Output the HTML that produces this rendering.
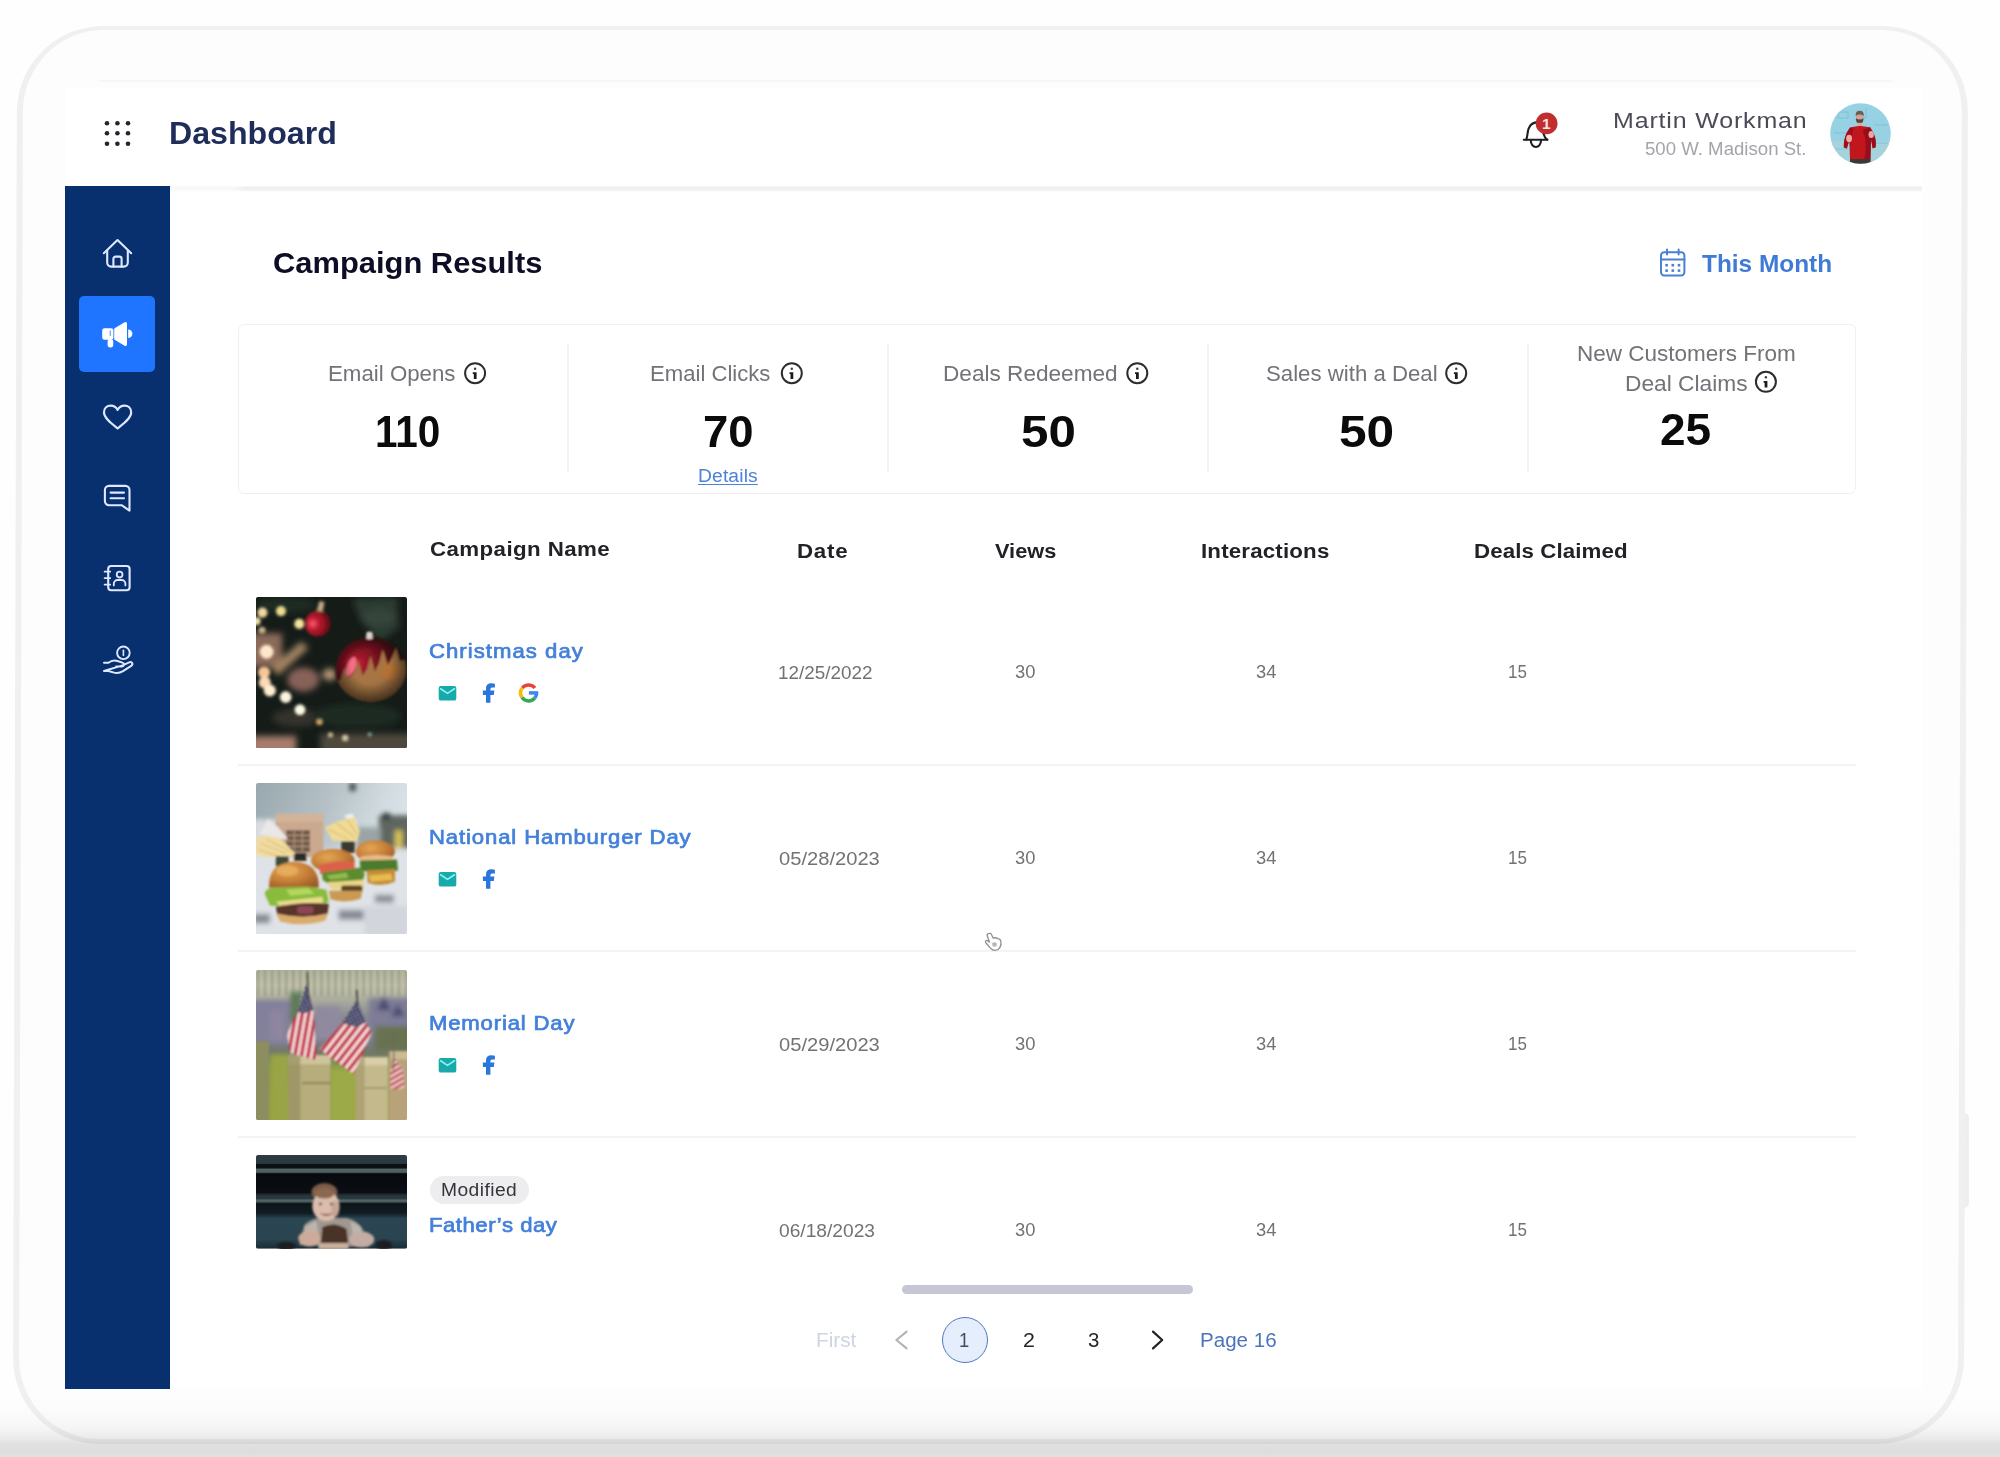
<!DOCTYPE html>
<html lang="en"><head><meta charset="utf-8"><title>Dashboard - Campaign Results</title>
<style>
*{box-sizing:border-box}
html,body{margin:0;padding:0}
body{width:2000px;height:1457px;position:relative;overflow:hidden;background:#fefefe;font-family:"Liberation Sans",sans-serif;}
.abs{position:absolute}
.tx{position:absolute;white-space:nowrap;line-height:1;margin:0;padding:0;transform-origin:0 0;text-decoration:none}
.one{margin-left:-0.07em;margin-right:-0.12em}
.shade{position:absolute;left:0;top:1392px;width:2000px;height:65px;background:linear-gradient(to bottom,rgba(0,0,0,0) 0%,rgba(0,0,0,0.008) 28%,rgba(0,0,0,0.028) 52%,rgba(0,0,0,0.07) 70%,rgba(0,0,0,0.115) 80%,rgba(0,0,0,0.13) 92%,rgba(0,0,0,0.115) 100%);pointer-events:none}
.frame{position:absolute;left:15.4px;top:25.5px;width:1951px;height:1418px;transform:skewX(-0.17deg);border:solid #f0f0f0;border-width:4px 6px 5px 6px;border-radius:86px;background:transparent}
.framein{position:absolute;left:21px;top:29px;width:1940px;height:1412px;border-radius:80px;background:#fdfdfd;transform:skewX(-0.17deg)}
.topline{position:absolute;left:99px;top:80px;width:1793px;height:1.5px;background:#f6f6f6}
.btn{position:absolute;left:1962px;top:1113px;width:7.4px;height:95px;background:#eeeeee;border-radius:0 5px 5px 0}
.screen{position:absolute;left:66px;top:88px;width:1857px;height:1301px;background:#fff}
.hdrline{position:absolute;left:170px;top:185.9px;width:1752px;height:6px;background:linear-gradient(to bottom,#f6f6f6 0%,#eeeeee 40%,#f3f3f3 70%,rgba(255,255,255,0) 100%);-webkit-mask-image:linear-gradient(to right,rgba(0,0,0,0.45) 0,rgba(0,0,0,0.45) 62px,#000 76px);mask-image:linear-gradient(to right,rgba(0,0,0,0.45) 0,rgba(0,0,0,0.45) 62px,#000 76px)}
.side{position:absolute;left:65px;top:186px;width:105px;height:1203px;background:#08306f}
.active{position:absolute;left:79.4px;top:295.9px;width:76px;height:76px;border-radius:5px;background:#1f75ff}
.card{position:absolute;left:238px;top:324px;width:1618px;height:170px;border:1.5px solid #f0f0f2;border-radius:6px;background:#fff}
.vdiv{position:absolute;top:344px;width:1.5px;height:129px;background:#f3f3f5}
.hsep{position:absolute;left:238px;width:1618px;height:1.6px;background:#f3f3f4}
.thumb{position:absolute;left:255.5px;width:151px;overflow:hidden;border-radius:2px}
.badge{position:absolute;left:430px;top:1176px;width:99px;height:28px;border-radius:14px;background:#ededf0}
.scroll{position:absolute;left:902px;top:1284.5px;width:290.5px;height:9px;border-radius:5px;background:#c5c7d5}
.pcur{position:absolute;left:942px;top:1316.8px;width:46.4px;height:46.4px;border-radius:50%;background:#e4eefc;border:1.6px solid #5278be}
svg{position:absolute;overflow:visible}
</style></head><body>
<div class="framein"></div><div class="btn"></div><div class="frame"></div><div class="topline"></div>
<div class="screen"></div>
<div class="hdrline"></div>
<nav class="side"></nav><div class="active"></div>
<svg width="2000" height="1457" viewBox="0 0 2000 1457" style="left:0;top:0" fill="none" stroke="#dfe8ff" stroke-width="2.1" stroke-linecap="round" stroke-linejoin="round"><path d="M103.8 253.2 L117.5 240 L131.2 253.2"/><path d="M107.2 250.6 V262.6 a4 4 0 0 0 4 4 H123.8 a4 4 0 0 0 4 -4 V250.6"/><path d="M113.4 266.4 V258.8 a2.2 2.2 0 0 1 2.2 -2.2 h3.8 a2.2 2.2 0 0 1 2.2 2.2 V266.4"/><g fill="#ffffff" stroke="none"><rect x="102.2" y="328.2" width="11.2" height="11.6" rx="2.4"/><path d="M114.2 328.6 L124.6 322.2 a1.6 1.6 0 0 1 2.4 1.4 V344.4 a1.6 1.6 0 0 1 -2.4 1.4 L114.2 339.4 Z"/><path d="M128.2 329.6 a4.2 4.2 0 0 1 0 8.4 Z"/><rect x="107.6" y="339" width="5.6" height="8.4" rx="2.6"/></g><path d="M110.3 331 v4.4" stroke="#7fb0ff" stroke-width="1.4"/><path d="M117.6 428.4 C112.2 424 104 418.2 104 412.4 C104 408 107.2 405.6 110.7 405.6 C113.7 405.6 116.3 407.4 117.6 409.9 C118.9 407.4 121.5 405.6 124.5 405.6 C128 405.6 131.2 408 131.2 412.4 C131.2 418.2 123 424 117.6 428.4 Z"/><path d="M109 485.9 H125.4 a4.1 4.1 0 0 1 4.1 4.1 V510.6 L121.6 505.2 H109 a4.1 4.1 0 0 1 -4.1 -4.1 V490 a4.1 4.1 0 0 1 4.1 -4.1 Z"/><path d="M110.6 492.6 H124 M110.6 498.2 H124"/><rect x="108.2" y="566" width="21.4" height="24.2" rx="3"/><path d="M104.6 571.6 h5.6 M104.6 578.1 h5.6 M104.6 584.6 h5.6" stroke-width="1.8"/><circle cx="119.6" cy="574.6" r="2.9" stroke-width="1.8"/><path d="M113.8 585.4 v-1.6 a3.8 3.8 0 0 1 3.8 -3.8 h4 a3.8 3.8 0 0 1 3.8 3.8 v1.6" stroke-width="1.8"/><circle cx="123.4" cy="652.8" r="6.3" stroke-width="1.9"/><path d="M123.4 650.2 v5.2" stroke-width="1.6"/><path d="M104 662.8 h4.4 c2.8 -2.2 6 -2.8 9 -1.8 l5 1.6 c2.2 0.8 2.2 3.6 -0.4 3.8 h-5.8 M122.6 665.4 l6.6 -3 c2.8 -1.2 4.4 1.8 2 3.4 l-8.2 5.4 c-3 1.8 -6.6 2.2 -9.8 1.2 l-4.8 -1.4 h-4.4 Z" stroke-width="2"/></svg>
<svg width="2000" height="1457" viewBox="0 0 2000 1457" style="left:0;top:0" fill="none" ><circle cx="107.0" cy="123.2" r="2.3" fill="#24242c"/><circle cx="117.4" cy="123.2" r="2.3" fill="#24242c"/><circle cx="128.0" cy="123.2" r="2.3" fill="#24242c"/><circle cx="107.0" cy="133.3" r="2.3" fill="#24242c"/><circle cx="117.4" cy="133.3" r="2.3" fill="#24242c"/><circle cx="128.0" cy="133.3" r="2.3" fill="#24242c"/><circle cx="107.0" cy="143.7" r="2.3" fill="#24242c"/><circle cx="117.4" cy="143.7" r="2.3" fill="#24242c"/><circle cx="128.0" cy="143.7" r="2.3" fill="#24242c"/><g stroke="#1d1d22" stroke-width="2.1" stroke-linecap="round" stroke-linejoin="round"><path d="M1523.8 139.8 H1547.4"/><path d="M1526.3 139.6 C1527.6 136 1527.4 132 1528.6 128.6 C1529.8 125.4 1532.2 123 1536 122.4"/><path d="M1543.4 133.6 C1544.2 136.6 1545.4 138.4 1547.2 139.6"/><path d="M1530.8 140.6 a5.1 6.4 0 0 0 10.2 0"/></g><circle cx="1546.6" cy="123.4" r="10.9" fill="#c02e30"/><text x="1546.3" y="128.9" text-anchor="middle" font-family="Liberation Sans, sans-serif" font-size="15.5" font-weight="700" fill="#ffe2e2">1</text><g stroke="#4b80d6" stroke-width="2" stroke-linecap="round" stroke-linejoin="round"><rect x="1661" y="252.2" width="23.4" height="23.2" rx="3.2"/><path d="M1661 259.6 H1684.4 M1667 249.4 V254.4 M1678.6 249.4 V254.4"/></g><rect x="1665.3" y="263.9" width="2.6" height="2.6" fill="#4b80d6"/><rect x="1671.5" y="263.9" width="2.6" height="2.6" fill="#4b80d6"/><rect x="1677.7" y="263.9" width="2.6" height="2.6" fill="#4b80d6"/><rect x="1665.3" y="269.3" width="2.6" height="2.6" fill="#4b80d6"/><rect x="1671.5" y="269.3" width="2.6" height="2.6" fill="#4b80d6"/><rect x="1677.7" y="269.3" width="2.6" height="2.6" fill="#4b80d6"/></svg><svg width="61" height="61" viewBox="0 0 61 61" style="left:1829.6px;top:103.2px"><defs><clipPath id="avc"><circle cx="30.5" cy="30.5" r="30.3"/></clipPath><filter id="avb" x="-20%" y="-20%" width="140%" height="140%"><feGaussianBlur stdDeviation="0.65"/></filter></defs><g clip-path="url(#avc)"><rect width="61" height="61" fill="#96d2e3"/><rect x="0" y="38" width="61" height="23" fill="#a4d3dc"/><g filter="url(#avb)"><path d="M8 9 h10 v6 h-10z M36 5 v10 h-6 M4 30 h14 M44 22 h14 M46 40 h12 M6 46 h12" stroke="#78bccc" stroke-width="0.8" fill="none"/><ellipse cx="29.7" cy="13.6" rx="3.9" ry="5.3" fill="#caa898"/><path d="M25.7 13 Q25.2 7.8 29.7 7.8 Q34.2 7.8 33.7 13 Q29.7 10.2 25.7 13Z" fill="#6e5c54"/><path d="M25.9 15.2 Q29.7 17.6 33.5 15.2 Q33.8 20.2 29.7 20.8 Q25.6 20.2 25.9 15.2Z" fill="#58463e"/><rect x="27.5" y="19.8" width="4.6" height="4.2" fill="#e4a49c"/><path d="M20 24.6 q10 -3.4 20 0 l3 5 q3.6 7 2.6 15 l-3 1 l-1.6 -9 l-0.6 20 h-20.4 l-0.6 -20 l-2.6 9 l-3 -1 q-0.4 -8 3 -15 z" fill="#c0121f"/><path d="M33 27 q5 12 1.5 29 h6 l0.6 -20 l1.6 9 l3 -1 q1 -8 -2.6 -15 l-3 -5z" fill="#8c0e1a" opacity="0.8"/><path d="M20 24.6 l-3 5 q-3.4 7 -3 15 l3 1 l2.6 -9 l0.2 8 q1.6 -12 3.4 -19z" fill="#960f1c" opacity="0.7"/><ellipse cx="19.1" cy="35.4" rx="2.9" ry="3.7" fill="#f0aaa4"/><ellipse cx="41.2" cy="31.6" rx="2.7" ry="3.5" fill="#eaa6a0"/><rect x="20" y="56" width="20.6" height="5" fill="#3c3838"/></g></g></svg>
<section class="card"></section>
<div class="vdiv" style="left:567px"></div>
<div class="vdiv" style="left:887.2px"></div>
<div class="vdiv" style="left:1207.2px"></div>
<div class="vdiv" style="left:1527px"></div>
<svg width="2000" height="1457" viewBox="0 0 2000 1457" style="left:0;top:0" fill="none" ><circle cx="475.1" cy="373.2" r="10" stroke="#2c2c30" stroke-width="2"/><circle cx="475.1" cy="368.7" r="1.2" fill="#3c3c40"/><path d="M472.8 372.3 h3.8 v6.6 h-2.8 v-4.8 h-1 z" fill="#1c1c1e"/><circle cx="791.8" cy="373.2" r="10" stroke="#2c2c30" stroke-width="2"/><circle cx="791.8" cy="368.7" r="1.2" fill="#3c3c40"/><path d="M789.5 372.3 h3.8 v6.6 h-2.8 v-4.8 h-1 z" fill="#1c1c1e"/><circle cx="1137.3" cy="373.2" r="10" stroke="#2c2c30" stroke-width="2"/><circle cx="1137.3" cy="368.7" r="1.2" fill="#3c3c40"/><path d="M1135.0 372.3 h3.8 v6.6 h-2.8 v-4.8 h-1 z" fill="#1c1c1e"/><circle cx="1456.2" cy="373.2" r="10" stroke="#2c2c30" stroke-width="2"/><circle cx="1456.2" cy="368.7" r="1.2" fill="#3c3c40"/><path d="M1453.9 372.3 h3.8 v6.6 h-2.8 v-4.8 h-1 z" fill="#1c1c1e"/><circle cx="1765.9" cy="381.8" r="10" stroke="#2c2c30" stroke-width="2"/><circle cx="1765.9" cy="377.3" r="1.2" fill="#3c3c40"/><path d="M1763.6 380.9 h3.8 v6.6 h-2.8 v-4.8 h-1 z" fill="#1c1c1e"/></svg>
<div class="hsep" style="top:764px"></div>
<div class="hsep" style="top:950px"></div>
<div class="hsep" style="top:1136px"></div>
<svg class="thumb" width="151" height="151" viewBox="0 0 150 150" preserveAspectRatio="none" style="left:255.5px;top:597px;border-radius:2px"><defs><filter id="x1" x="-30%" y="-30%" width="160%" height="160%"><feGaussianBlur stdDeviation="1.5"/></filter><filter id="x2" x="-30%" y="-30%" width="160%" height="160%"><feGaussianBlur stdDeviation="3.2"/></filter><filter id="x3" x="-30%" y="-30%" width="160%" height="160%"><feGaussianBlur stdDeviation="0.9"/></filter><radialGradient id="xo" cx="0.3" cy="0.42" r="0.8"><stop offset="0" stop-color="#c42038"/><stop offset="0.25" stop-color="#8c1424"/><stop offset="0.6" stop-color="#4c0d16"/><stop offset="1" stop-color="#2a0a0e"/></radialGradient><linearGradient id="xg" x1="0" y1="0" x2="1" y2="1"><stop offset="0" stop-color="#9a6c48"/><stop offset="0.5" stop-color="#a87644"/><stop offset="1" stop-color="#86603e"/></linearGradient><radialGradient id="xs" cx="0.5" cy="0.45" r="0.55"><stop offset="0.5" stop-color="#000" stop-opacity="0"/><stop offset="1" stop-color="#000" stop-opacity="0.55"/></radialGradient><radialGradient id="xr" cx="0.3" cy="0.5" r="0.75"><stop offset="0" stop-color="#ff6078"/><stop offset="0.3" stop-color="#c01c30"/><stop offset="0.75" stop-color="#7c0e1a"/><stop offset="1" stop-color="#40080e"/></radialGradient><clipPath id="xc"><ellipse cx="114" cy="72" rx="35" ry="32"/></clipPath></defs><rect width="150" height="150" fill="#151c18"/><g filter="url(#x2)"><rect x="-6" y="36" width="32" height="34" fill="#8c6a5a"/><path d="M15 70 L45 44 L52 51 L22 78Z" fill="#a08260"/><ellipse cx="47" cy="82" rx="16" ry="12" fill="#866259"/><ellipse cx="73" cy="77" rx="7" ry="6" fill="#b89878"/><rect x="-6" y="138" width="46" height="18" fill="#a67c6c"/><rect x="64" y="136" width="92" height="20" fill="#50483e"/><path d="M96 2 L140 0 L142 30 L124 44 L104 24Z" fill="#2c3a32"/><ellipse cx="122" cy="20" rx="16" ry="9" fill="#36443a"/><ellipse cx="40" cy="120" rx="24" ry="9" fill="#34322a"/><ellipse cx="100" cy="118" rx="44" ry="12" fill="#1a2a22"/><ellipse cx="30" cy="8" rx="30" ry="8" fill="#1c2a24"/></g><g filter="url(#x1)"><path d="M60 15 L63 4 L68 5 L66 16Z" fill="#c4ac8a"/><circle cx="61.5" cy="26.5" r="12.8" fill="url(#xr)"/></g><g filter="url(#x3)"><ellipse cx="114" cy="72" rx="35" ry="32" fill="url(#xo)"/><g clip-path="url(#xc)"><path d="M76 86 L84 82 L88 70 L92 80 L97 76 L101 62 L106 78 L110 72 L114 58 L118 74 L122 66 L126 52 L131 68 L135 60 L139 50 L143 64 L152 60 L152 110 L76 110Z" fill="url(#xg)"/><ellipse cx="133" cy="74" rx="9" ry="8" fill="#c0702e" opacity="0.6"/><ellipse cx="94.5" cy="69" rx="4.2" ry="10" fill="#ff7890" opacity="0.9" transform="rotate(20 94.5 69)"/><path d="M80 60 Q84 48 94 42" stroke="#e8c8c8" stroke-width="1.2" fill="none" opacity="0.7"/><ellipse cx="114" cy="72" rx="35" ry="32" fill="url(#xs)"/></g><rect x="109.5" y="34.5" width="6.5" height="7.5" rx="2" fill="#dcd4cc"/></g><g filter="url(#x1)"><circle cx="6.4" cy="15.5" r="5" fill="#f3d79e"/><circle cx="24.8" cy="14" r="5" fill="#efdb8e"/><circle cx="43" cy="26.7" r="5" fill="#f4e49c"/><circle cx="0.5" cy="24" r="4" fill="#f2e2b0"/><circle cx="10.5" cy="54.5" r="7" fill="#ffe8ca"/><circle cx="8" cy="75" r="6" fill="#f7c698"/><circle cx="8.7" cy="85" r="6" fill="#fbdab6"/><circle cx="13.7" cy="92.8" r="6" fill="#ffefcf"/><circle cx="29.5" cy="99.5" r="5.8" fill="#fff4e2"/><circle cx="43.7" cy="112" r="5.4" fill="#fffbe9"/><circle cx="63" cy="124" r="3.4" fill="#c9a162"/><circle cx="74" cy="137" r="2.6" fill="#c8b48a"/><circle cx="88.6" cy="140" r="3.2" fill="#d4c6a4"/><circle cx="6" cy="33" r="3.5" fill="#c9b088"/><circle cx="113" cy="136.6" r="2" fill="#86acac"/></g></svg><svg class="thumb" width="151" height="151" viewBox="0 0 150 150" preserveAspectRatio="none" style="left:255.5px;top:783px;border-radius:2px"><defs><filter id="b1" x="-30%" y="-30%" width="160%" height="160%"><feGaussianBlur stdDeviation="1.0"/></filter><filter id="b2" x="-30%" y="-30%" width="160%" height="160%"><feGaussianBlur stdDeviation="2.4"/></filter><linearGradient id="bb" x1="0" y1="0" x2="1" y2="0.35"><stop offset="0" stop-color="#98a8ae"/><stop offset="0.45" stop-color="#b4c0c5"/><stop offset="0.8" stop-color="#d2dce0"/><stop offset="1" stop-color="#dce5e9"/></linearGradient><radialGradient id="bn" cx="0.38" cy="0.35" r="0.75"><stop offset="0" stop-color="#e4a654"/><stop offset="0.5" stop-color="#c8823a"/><stop offset="1" stop-color="#9c5a26"/></radialGradient></defs><rect width="150" height="150" fill="url(#bb)"/><g filter="url(#b2)"><rect x="-5" y="66" width="160" height="90" fill="#dfe2e6"/><rect x="122" y="32" width="34" height="33" fill="#5e6660"/><rect x="126" y="30" width="7" height="6" fill="#24282c"/><rect x="138" y="47" width="7.5" height="18" fill="#d8c254"/><rect x="100" y="44" width="24" height="22" fill="#9aa4a4"/><rect x="-3" y="36" width="24" height="30" fill="#dadde0"/><rect x="118" y="111" width="19" height="8" fill="#8a9098"/><rect x="82" y="126" width="25" height="10" fill="#868c96"/><rect x="-3" y="130" width="17" height="9.5" fill="#868c96"/><rect x="108" y="122" width="44" height="30" fill="#d2d6dc"/><rect x="93" y="0" width="6" height="8" fill="#3a4048"/></g><g filter="url(#b1)"><rect x="19.7" y="30.6" width="47.2" height="43" fill="#caa98f"/><rect x="19.7" y="30.6" width="47.2" height="8" fill="#d3b39a"/><rect x="30" y="47" width="23.6" height="21.4" fill="#705848"/><path d="M30 52 h23.6 M30 57.5 h23.6 M30 63 h23.6 M38 47 v21 M46 47 v21" stroke="#b49880" stroke-width="1.1"/><rect x="38" y="69.4" width="12" height="8" fill="#2c2a28"/><path d="M4 50 L12 36 L22 44 L32 56 L18 56Z" fill="#e8e8e8"/><path d="M0 55 L10 52 L24 55 L39 70 L32 75 L4 73 L0 70Z" fill="#f0dca0"/><path d="M4 60 L30 70 M10 56 L34 68 M2 66 L24 73" stroke="#d8bc70" stroke-width="1"/><rect x="19.7" y="72.8" width="12.7" height="10" fill="#3b4a3a"/><path d="M88 32 L96 30 L101 40 L92 42Z" fill="#ececea"/><path d="M68.6 44 L82 38 L98 34 L103 48 L100 58 L76 57Z" fill="#f0da94"/><path d="M72 46 L92 56 M80 40 L98 54 M90 36 L100 50" stroke="#d6bc6c" stroke-width="1"/><rect x="84.7" y="58" width="13.3" height="11.4" fill="#3a3830"/><ellipse cx="118.5" cy="68" rx="19.5" ry="11.2" fill="url(#bn)"/><path d="M104 73 Q120 70 136 73 L136 78 L104 78Z" fill="#e8ba8a"/><path d="M103 77 L140 76 L141 87 L122 90 L104 87Z" fill="#4c7c2e"/><path d="M110 87 L138 85.5 L138 98 Q124 104 111 99Z" fill="#c48c3a"/><path d="M112 92 L134 90 L136 96 L114 98Z" fill="#e6bc50"/><ellipse cx="76.3" cy="77" rx="21.7" ry="11.6" fill="url(#bn)"/><path d="M62.4 82 Q80 76 98 79 L98 88 Q80 90 64 91Z" fill="#dc6048"/><path d="M65.8 89 L104 84 L108 90 L106 98 L72 100 L66 96Z" fill="#5c8c2e"/><path d="M70 92 L90 89 L92 94 L74 96Z" fill="#92ba4a"/><path d="M71 98.5 L107 96 L107 104.5 L75 106Z" fill="#ead688"/><rect x="84.7" y="101.7" width="21" height="6.6" rx="2" fill="#5a4420"/><path d="M72.4 107 L105.8 107 L104 115 Q88 120 74 115.5Z" fill="#ca9a52"/><path d="M13 104 Q12 79 37.7 78.3 Q63 79 62.4 104 Z" fill="url(#bn)"/><ellipse cx="31" cy="87" rx="11" ry="5.5" fill="#eab060" opacity="0.75"/><path d="M8.6 110 Q10 103 22 104 L50 102.8 L70 106 L72.4 118 L60 122.8 L14 122Z" fill="#88bc3c"/><path d="M30 106 L52 104.5 L58 110 L34 112Z" fill="#b6d660"/><path d="M20 118 L66 113 L67 121 L26 125Z" fill="#eadc8c"/><path d="M19.7 123 Q46 117.5 72.4 120 L71 130.5 Q46 136 21 130.5Z" fill="#58342a"/><rect x="41" y="122.5" width="16" height="7.5" rx="2" fill="#944a5a" opacity="0.85"/><path d="M20 129.6 Q46 136 71.3 129.6 L69 136.5 Q46 143.5 24 137.5Z" fill="#daac6c"/></g></svg><svg class="thumb" width="151" height="150.5" viewBox="0 0 150 150" preserveAspectRatio="none" style="left:255.5px;top:969.5px;border-radius:2px"><defs><filter id="f1" x="-30%" y="-30%" width="160%" height="160%"><feGaussianBlur stdDeviation="0.9"/></filter><filter id="f2" x="-30%" y="-30%" width="160%" height="160%"><feGaussianBlur stdDeviation="2.4"/></filter><linearGradient id="fb" x1="0" y1="0" x2="0" y2="1"><stop offset="0" stop-color="#acae96"/><stop offset="0.1" stop-color="#bebea8"/><stop offset="0.2" stop-color="#aaac9c"/><stop offset="0.3" stop-color="#8c8e92"/><stop offset="0.46" stop-color="#7c7c90"/><stop offset="0.55" stop-color="#707866"/><stop offset="0.64" stop-color="#8a984a"/><stop offset="1" stop-color="#96a244"/></linearGradient><pattern id="fs1" width="6.4" height="6.4" patternUnits="userSpaceOnUse" patternTransform="rotate(10)"><rect width="6.4" height="6.4" fill="#f3dede"/><rect width="3.3" height="6.4" fill="#c2283e"/></pattern><pattern id="fs2" width="6.6" height="6.6" patternUnits="userSpaceOnUse" patternTransform="rotate(-52)"><rect width="6.6" height="6.6" fill="#f5e0de"/><rect width="6.6" height="3.4" fill="#c12c40"/></pattern><pattern id="fs3" width="5" height="5" patternUnits="userSpaceOnUse" patternTransform="rotate(-30)"><rect width="5" height="5" fill="#ead0cc"/><rect width="5" height="2.6" fill="#c24a50"/></pattern><pattern id="fst" width="3.4" height="3.4" patternUnits="userSpaceOnUse" patternTransform="rotate(-25)"><rect width="3.4" height="3.4" fill="#33365a"/><circle cx="1.7" cy="1.7" r="0.75" fill="#d8d8e8"/></pattern><pattern id="fgr" width="7" height="30" patternUnits="userSpaceOnUse"><rect width="7" height="30" fill="none"/><rect x="1" width="2.2" height="30" fill="#8c8e78" opacity="0.5"/><rect x="4.6" width="1.4" height="30" fill="#c8c8b0" opacity="0.5"/></pattern></defs><rect width="150" height="150" fill="url(#fb)"/><g filter="url(#f1)"><rect width="150" height="26" fill="url(#fgr)"/></g><g filter="url(#f2)"><rect x="-4" y="30" width="38" height="44" fill="#82809a"/><rect x="14" y="40" width="14" height="30" fill="#8e86a0"/><rect x="58" y="36" width="26" height="34" fill="#908a9e"/><rect x="112" y="28" width="44" height="30" fill="#7e7c96"/><path d="M120 40 L127 26 L134 40Z M134 46 L141 34 L148 46Z" fill="#4a4a72"/><rect x="118" y="56" width="36" height="24" fill="#687250"/><rect x="34" y="22" width="12" height="30" fill="#5e7a58"/><rect x="14" y="84" width="20" height="70" fill="#98a444"/><rect x="74" y="98" width="26" height="56" fill="#9caa46"/></g><g filter="url(#f1)"><rect x="-2" y="71" width="15" height="82" fill="#8c8e5e"/><rect x="32" y="85" width="42" height="68" fill="#b6ac7c"/><rect x="32" y="85" width="42" height="9" fill="#cec49a"/><rect x="32" y="85" width="12" height="68" fill="#968e5e" opacity="0.7"/><rect x="46" y="112" width="28" height="1.6" fill="#857a54"/><rect x="99" y="87" width="32" height="66" fill="#c4b98c"/><rect x="99" y="87" width="32" height="8" fill="#d8cea8"/><rect x="99" y="87" width="9" height="66" fill="#a69a6a" opacity="0.7"/><rect x="108" y="117" width="22" height="1.4" fill="#9a8e64"/><rect x="132" y="81" width="20" height="72" fill="#b8a27a"/><rect x="134" y="81" width="18" height="8" fill="#cabc94"/><path d="M50 14 L57 40 L60.5 90 L34 83 L30.5 64 L41 42Z" fill="url(#fs1)"/><path d="M50 14 L57 40 L48 43 L41 42 Z" fill="url(#fst)"/><path d="M51 2 L52 30" stroke="#4a4a3a" stroke-width="1.4"/><path d="M100 30 L109 51 L115 63 L97 104 L63 79 L86 53Z" fill="url(#fs2)"/><path d="M100 30 L109.5 52 L100 57 L86 53 Z" fill="url(#fst)"/><path d="M100 20 L101 36" stroke="#3a3a34" stroke-width="1.4"/><path d="M138 88 L146 100 L147.5 118 L134 119 L133 102Z" fill="url(#fs3)"/><path d="M137.5 60 L136.5 100" stroke="#6a6a58" stroke-width="1.2"/></g></svg><svg class="thumb" width="151" height="93.6" viewBox="0 0 150 93.5" preserveAspectRatio="none" style="left:255.5px;top:1155.3px;border-radius:2px"><defs><filter id="d1" x="-30%" y="-30%" width="160%" height="160%"><feGaussianBlur stdDeviation="1.2"/></filter><filter id="d2" x="-30%" y="-30%" width="160%" height="160%"><feGaussianBlur stdDeviation="0.7"/></filter><linearGradient id="db" x1="0" y1="0" x2="0" y2="1"><stop offset="0" stop-color="#2c3c42"/><stop offset="0.09" stop-color="#2a3a40"/><stop offset="0.1" stop-color="#0a1014"/><stop offset="0.14" stop-color="#0b1216"/><stop offset="0.15" stop-color="#566664"/><stop offset="0.185" stop-color="#4c5c5c"/><stop offset="0.2" stop-color="#070b0f"/><stop offset="0.4" stop-color="#0a0e12"/><stop offset="0.43" stop-color="#25343a"/><stop offset="0.47" stop-color="#2a3a40"/><stop offset="0.48" stop-color="#586868"/><stop offset="0.5" stop-color="#4a5a5c"/><stop offset="0.52" stop-color="#0c1418"/><stop offset="0.62" stop-color="#101c22"/><stop offset="0.68" stop-color="#2a4652"/><stop offset="0.9" stop-color="#2a4450"/><stop offset="1" stop-color="#1a2c36"/></linearGradient></defs><rect width="150" height="93.5" fill="url(#db)"/><g filter="url(#d1)"><path d="M43 90 L48 70 Q56 62 68 63 L90 63 Q102 66 106 74 L112 92 Z" fill="#a09890"/><path d="M48 72 L60 66 L62 80 L50 84Z M94 66 L104 72 L106 84 L96 80Z" fill="#c8c2bc" opacity="0.7"/><path d="M66 72 Q78 66 90 74 L92 92 L64 92Z" fill="#4a3028"/><ellipse cx="53" cy="83.5" rx="11" ry="8" fill="#cdaa9a"/><ellipse cx="105" cy="84.5" rx="12.5" ry="8" fill="#c2aca4"/><ellipse cx="30" cy="91" rx="9" ry="4" fill="#1a1c20"/><ellipse cx="127" cy="90" rx="8" ry="4.5" fill="#1a1c20"/><rect x="62" y="88" width="30" height="6" fill="#c9b09c"/><ellipse cx="68" cy="37" rx="13" ry="9" fill="#7c5c46"/><ellipse cx="69.5" cy="51" rx="13.5" ry="15" fill="#dcbcac"/><ellipse cx="79" cy="54" rx="4" ry="8" fill="#b89888" opacity="0.6"/><ellipse cx="68" cy="38" rx="10" ry="5.5" fill="#8a6850"/><path d="M63 58 Q70 64 77 58 Q70 60 63 58Z" fill="#8a4a44"/><ellipse cx="64" cy="49" rx="1.6" ry="1.2" fill="#5a4a44"/><ellipse cx="75" cy="49" rx="1.6" ry="1.2" fill="#5a4a44"/></g></svg>
<svg width="2000" height="1457" viewBox="0 0 2000 1457" style="left:0;top:0" fill="none" ><rect x="438.7" y="686.0" width="17.6" height="14.6" rx="2.2" fill="#18aaaa"/><path d="M440.6 688.8 L447.5 693.4 L454.4 688.8" stroke="#8af2ee" stroke-width="1.7" stroke-linecap="round" stroke-linejoin="round"/><path transform="translate(0 0.0)" fill="#2a76da" d="M486 702.8 V695 H482.9 V690.6 H486 V688 C486 685 488 683.3 491.2 683.3 C492.8 683.3 494 683.5 494.9 683.7 V687.6 C494.3 687.5 493.6 687.4 492.8 687.4 C491.2 687.4 490.4 688 490.4 689.4 V690.6 H494.4 L493.8 695 H490.4 V702.8 Z"/><path d="M534.90 687.97 A8.0 8.0 0 0 0 522.30 687.97" stroke="#ea4335" stroke-width="3.5"/><path d="M522.30 687.97 A8.0 8.0 0 0 0 522.05 697.49" stroke="#fbbc05" stroke-width="3.5"/><path d="M522.05 697.49 A8.0 8.0 0 0 0 534.90 697.83" stroke="#34a853" stroke-width="3.5"/><path d="M534.90 697.83 A8.0 8.0 0 0 0 536.60 692.62" stroke="#4285f4" stroke-width="3.5"/><path d="M528.9 692.9 H538.2" stroke="#4285f4" stroke-width="3.5"/><rect x="438.7" y="872.0" width="17.6" height="14.6" rx="2.2" fill="#18aaaa"/><path d="M440.6 874.8 L447.5 879.4 L454.4 874.8" stroke="#8af2ee" stroke-width="1.7" stroke-linecap="round" stroke-linejoin="round"/><path transform="translate(0 186.0)" fill="#2a76da" d="M486 702.8 V695 H482.9 V690.6 H486 V688 C486 685 488 683.3 491.2 683.3 C492.8 683.3 494 683.5 494.9 683.7 V687.6 C494.3 687.5 493.6 687.4 492.8 687.4 C491.2 687.4 490.4 688 490.4 689.4 V690.6 H494.4 L493.8 695 H490.4 V702.8 Z"/><rect x="438.7" y="1058.0" width="17.6" height="14.6" rx="2.2" fill="#18aaaa"/><path d="M440.6 1060.8 L447.5 1065.4 L454.4 1060.8" stroke="#8af2ee" stroke-width="1.7" stroke-linecap="round" stroke-linejoin="round"/><path transform="translate(0 372.0)" fill="#2a76da" d="M486 702.8 V695 H482.9 V690.6 H486 V688 C486 685 488 683.3 491.2 683.3 C492.8 683.3 494 683.5 494.9 683.7 V687.6 C494.3 687.5 493.6 687.4 492.8 687.4 C491.2 687.4 490.4 688 490.4 689.4 V690.6 H494.4 L493.8 695 H490.4 V702.8 Z"/></svg>
<div class="badge"></div>
<div class="scroll"></div><div class="pcur"></div>
<svg width="2000" height="1457" viewBox="0 0 2000 1457" style="left:0;top:0" fill="none" stroke-width="2.2" stroke-linecap="round" stroke-linejoin="round"><path d="M906.6 1331.6 L896.4 1340 L906.6 1348.4" stroke="#b4b4b8"/><path d="M1153 1331.6 L1162.2 1340 L1153 1348.4" stroke="#222226"/><path d="M988.4 933.6 c1.4 -0.7 2.7 -0.1 3.2 1.2 l1.5 3.3 c1.8 -0.6 3.4 -0.4 4.5 0.5 c1.5 0 2.8 0.9 3.2 2.3 c0.6 2.3 0.2 5 -1.1 6.9 c-1.1 1.6 -2.7 2.5 -4.6 2.5 c-1.8 0 -3.2 -0.6 -4.4 -2 l-4.9 -5.6 c-1 -1.3 0.3 -2.8 1.7 -2 l2 1.4 l-2.2 -6.1 c-0.4 -1 0.1 -2 1.1 -2.4 z" fill="#ffffff" stroke="#8e8e8e" stroke-width="1.3"/><rect x="992.4" y="942.4" width="4.2" height="4" rx="0.8" fill="#b4b4b4" stroke="none"/></svg>
<header><h1 id="t_dash" class="tx" style="left:168.5px;top:118.25px;font-size:31px;font-weight:700;color:#1f2d5a;letter-spacing:0.000px;transform:scaleX(1.0368);">Dashboard</h1>
<span id="t_name" class="tx" style="left:1613.3px;top:109.88px;font-size:22.3px;font-weight:400;color:#4b4b57;letter-spacing:0.754px;transform:scaleX(1.1200);">Martin Workman</span>
<span id="t_addr" class="tx" style="left:1645.0px;top:141.27px;font-size:17.5px;font-weight:400;color:#a3a3ab;letter-spacing:0.000px;transform:scaleX(1.0638);">500 W. Madison St.</span></header>
<main>
<section class="stats"><h2 id="t_camp" class="tx" style="left:272.9px;top:247.67px;font-size:29.3px;font-weight:700;color:#0d0d26;letter-spacing:0.000px;transform:scaleX(1.0539);">Campaign Results</h2>
<span id="t_month" class="tx" style="left:1701.9px;top:251.77px;font-size:24px;font-weight:700;color:#3f7ad6;letter-spacing:0.000px;transform:scaleX(1.0164);">This Month</span>
<span id="t_s1" class="tx" style="left:327.8px;top:364.44px;font-size:21.5px;font-weight:400;color:#727278;letter-spacing:0.000px;transform:scaleX(1.0360);">Email Opens</span>
<span id="t_s2" class="tx" style="left:650.4px;top:364.44px;font-size:21.5px;font-weight:400;color:#727278;letter-spacing:0.000px;transform:scaleX(1.0285);">Email Clicks</span>
<span id="t_s3" class="tx" style="left:943.2px;top:364.44px;font-size:21.5px;font-weight:400;color:#727278;letter-spacing:0.000px;transform:scaleX(1.0514);">Deals Redeemed</span>
<span id="t_s4" class="tx" style="left:1266.0px;top:364.44px;font-size:21.5px;font-weight:400;color:#727278;letter-spacing:0.000px;transform:scaleX(1.0331);">Sales with a Deal</span>
<span id="t_s5a" class="tx" style="left:1577.0px;top:343.54px;font-size:21.5px;font-weight:400;color:#727278;letter-spacing:0.000px;transform:scaleX(1.0466);">New Customers From</span>
<span id="t_s5b" class="tx" style="left:1624.8px;top:373.84px;font-size:21.5px;font-weight:400;color:#727278;letter-spacing:0.000px;transform:scaleX(1.0575);">Deal Claims</span>
<span id="t_n1" class="tx" style="left:374.6px;top:410.16px;font-size:44px;font-weight:700;color:#0b0b0b;letter-spacing:0.000px;transform:scaleX(0.9200);">110</span>
<span id="t_n2" class="tx" style="left:703.0px;top:410.16px;font-size:44px;font-weight:700;color:#0b0b0b;letter-spacing:0.000px;transform:scaleX(1.0329);">70</span>
<span id="t_n3" class="tx" style="left:1021.3px;top:410.16px;font-size:44px;font-weight:700;color:#0b0b0b;letter-spacing:0.000px;transform:scaleX(1.1190);">50</span>
<span id="t_n4" class="tx" style="left:1338.5px;top:410.16px;font-size:44px;font-weight:700;color:#0b0b0b;letter-spacing:0.000px;transform:scaleX(1.1276);">50</span>
<span id="t_n5" class="tx" style="left:1660.4px;top:407.86px;font-size:44px;font-weight:700;color:#0b0b0b;letter-spacing:0.000px;transform:scaleX(1.0449);">25</span>
<a id="t_det" class="tx" style="left:697.9px;top:467.15px;font-size:18px;font-weight:400;color:#4d82d8;letter-spacing:0.124px;text-decoration:underline;text-underline-offset:2px;transform:scaleX(1.0700);">Details</a></section>
<section class="campaigns">
<div class="thead"><span id="t_h1" class="tx" style="left:430.3px;top:539.34px;font-size:20.3px;font-weight:700;color:#222226;letter-spacing:0.364px;transform:scaleX(1.1000);">Campaign Name</span>
<span id="t_h2" class="tx" style="left:796.7px;top:541.04px;font-size:20.3px;font-weight:700;color:#222226;letter-spacing:0.683px;transform:scaleX(1.1000);">Date</span>
<span id="t_h3" class="tx" style="left:995.1px;top:541.04px;font-size:20.3px;font-weight:700;color:#222226;letter-spacing:0.000px;transform:scaleX(1.0730);">Views</span>
<span id="t_h4" class="tx" style="left:1201.1px;top:541.04px;font-size:20.3px;font-weight:700;color:#222226;letter-spacing:0.154px;transform:scaleX(1.1000);">Interactions</span>
<span id="t_h5" class="tx" style="left:1474.1px;top:541.04px;font-size:20.3px;font-weight:700;color:#222226;letter-spacing:0.084px;transform:scaleX(1.1000);">Deals Claimed</span></div>
<article class="row"><a id="t_r0t" class="tx" style="left:429.2px;top:640.74px;font-size:20.3px;font-weight:400;color:#4380da;letter-spacing:0.962px;-webkit-text-stroke:0.72px #4380da;transform:scaleX(1.0900);">Christmas day</a>
<span id="t_r0d" class="tx" style="left:778.4px;top:663.64px;font-size:18.5px;font-weight:400;color:#727276;letter-spacing:0.000px;transform:scaleX(1.0197);">12/25/2022</span>
<span id="t_r0v" class="tx" style="left:1015.2px;top:663.14px;font-size:18.5px;font-weight:400;color:#727276;letter-spacing:0.000px;transform:scaleX(0.9907);">30</span>
<span id="t_r0i" class="tx" style="left:1256.4px;top:663.14px;font-size:18.5px;font-weight:400;color:#727276;letter-spacing:0.000px;transform:scaleX(0.9907);">34</span>
<span id="t_r0c" class="tx" style="left:1507.6px;top:663.14px;font-size:18.5px;font-weight:400;color:#727276;letter-spacing:0.000px;transform:scaleX(0.9200);">15</span></article>
<article class="row"><a id="t_r1t" class="tx" style="left:429.2px;top:826.74px;font-size:20.3px;font-weight:400;color:#4380da;letter-spacing:0.803px;-webkit-text-stroke:0.72px #4380da;transform:scaleX(1.0900);">National Hamburger Day</a>
<span id="t_r1d" class="tx" style="left:779.4px;top:849.64px;font-size:18.5px;font-weight:400;color:#727276;letter-spacing:0.000px;transform:scaleX(1.0888);">05/28/2023</span>
<span id="t_r1v" class="tx" style="left:1015.2px;top:849.14px;font-size:18.5px;font-weight:400;color:#727276;letter-spacing:0.000px;transform:scaleX(0.9907);">30</span>
<span id="t_r1i" class="tx" style="left:1256.4px;top:849.14px;font-size:18.5px;font-weight:400;color:#727276;letter-spacing:0.000px;transform:scaleX(0.9907);">34</span>
<span id="t_r1c" class="tx" style="left:1507.6px;top:849.14px;font-size:18.5px;font-weight:400;color:#727276;letter-spacing:0.000px;transform:scaleX(0.9200);">15</span></article>
<article class="row"><a id="t_r2t" class="tx" style="left:429.2px;top:1012.74px;font-size:20.3px;font-weight:400;color:#4380da;letter-spacing:0.759px;-webkit-text-stroke:0.72px #4380da;transform:scaleX(1.0900);">Memorial Day</a>
<span id="t_r2d" class="tx" style="left:779.4px;top:1035.64px;font-size:18.5px;font-weight:400;color:#727276;letter-spacing:0.000px;transform:scaleX(1.0888);">05/29/2023</span>
<span id="t_r2v" class="tx" style="left:1015.2px;top:1035.14px;font-size:18.5px;font-weight:400;color:#727276;letter-spacing:0.000px;transform:scaleX(0.9907);">30</span>
<span id="t_r2i" class="tx" style="left:1256.4px;top:1035.14px;font-size:18.5px;font-weight:400;color:#727276;letter-spacing:0.000px;transform:scaleX(0.9907);">34</span>
<span id="t_r2c" class="tx" style="left:1507.6px;top:1035.14px;font-size:18.5px;font-weight:400;color:#727276;letter-spacing:0.000px;transform:scaleX(0.9200);">15</span></article>
<article class="row"><span id="t_mod" class="tx" style="left:441.2px;top:1182.37px;font-size:17.5px;font-weight:400;color:#34343a;letter-spacing:0.395px;transform:scaleX(1.1000);">Modified</span>
<a id="t_r3t" class="tx" style="left:429.2px;top:1215.34px;font-size:20.3px;font-weight:400;color:#4380da;letter-spacing:0.483px;-webkit-text-stroke:0.72px #4380da;transform:scaleX(1.0900);">Father’s day</a>
<span id="t_r3d" class="tx" style="left:779.4px;top:1221.64px;font-size:18.5px;font-weight:400;color:#727276;letter-spacing:0.000px;transform:scaleX(1.0368);">06/18/2023</span>
<span id="t_r3v" class="tx" style="left:1015.2px;top:1221.14px;font-size:18.5px;font-weight:400;color:#727276;letter-spacing:0.000px;transform:scaleX(0.9907);">30</span>
<span id="t_r3i" class="tx" style="left:1256.4px;top:1221.14px;font-size:18.5px;font-weight:400;color:#727276;letter-spacing:0.000px;transform:scaleX(0.9907);">34</span>
<span id="t_r3c" class="tx" style="left:1507.6px;top:1221.14px;font-size:18.5px;font-weight:400;color:#727276;letter-spacing:0.000px;transform:scaleX(0.9200);">15</span></article>
</section>
<nav class="pager"><a id="t_first" class="tx" style="left:815.5px;top:1329.89px;font-size:20px;font-weight:400;color:#cdd4e2;letter-spacing:0.000px;transform:scaleX(1.0386);">First</a>
<a id="t_p1" class="tx" style="left:959.2px;top:1329.89px;font-size:20px;font-weight:400;color:#4a4a55;letter-spacing:0.000px;transform:scaleX(0.9200);">1</a>
<a id="t_p2" class="tx" style="left:1023.1px;top:1329.89px;font-size:20px;font-weight:400;color:#26262b;letter-spacing:0.000px;transform:scaleX(1.0700);">2</a>
<a id="t_p3" class="tx" style="left:1087.7px;top:1329.89px;font-size:20px;font-weight:400;color:#26262b;letter-spacing:0.000px;transform:scaleX(1.0182);">3</a>
<a id="t_pg" class="tx" style="left:1200.3px;top:1329.89px;font-size:20px;font-weight:400;color:#4b74ba;letter-spacing:0.000px;transform:scaleX(1.0274);">Page 16</a></nav>
</main>
<div class="shade"></div>
</body></html>
